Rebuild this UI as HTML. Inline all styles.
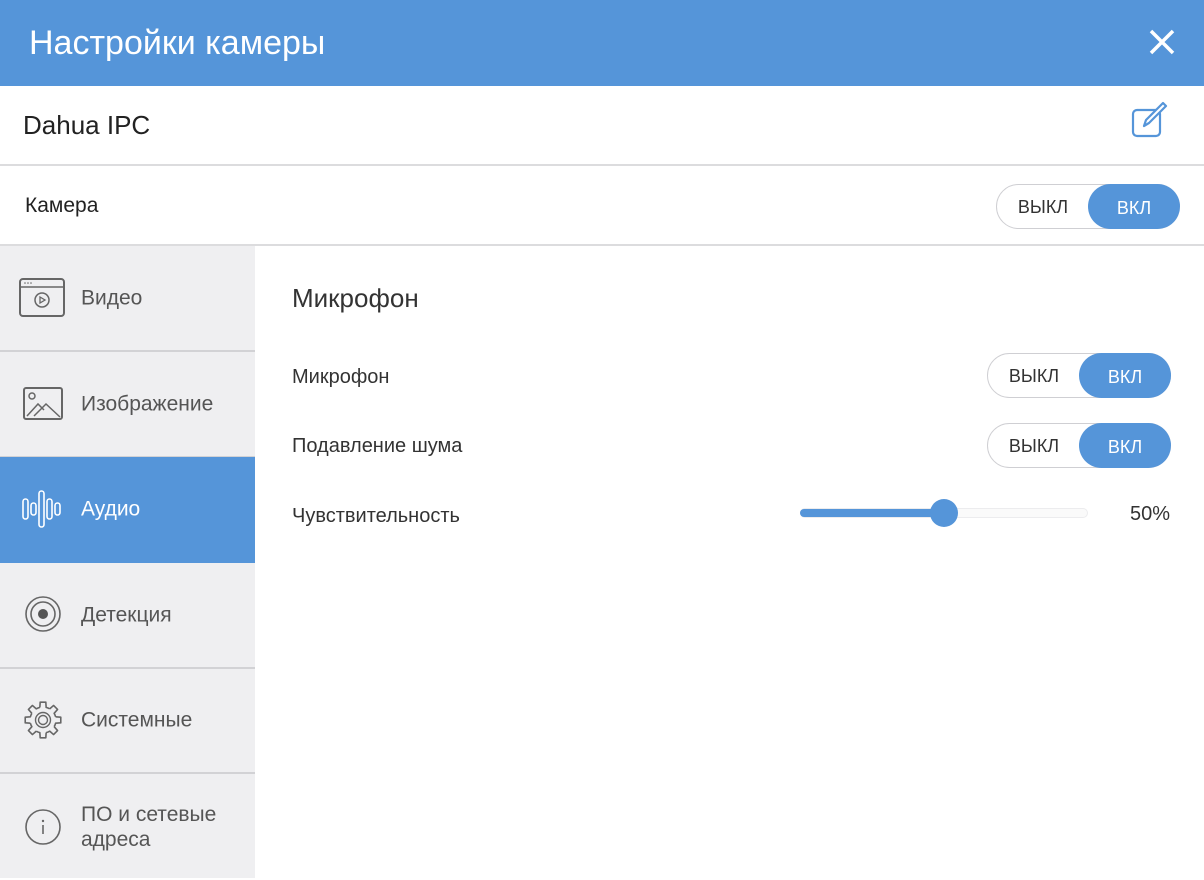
<!DOCTYPE html>
<html><head><meta charset="utf-8"><style>
*{margin:0;padding:0;box-sizing:border-box}
body{width:1204px;height:878px;overflow:hidden;background:#fff;font-family:"Liberation Sans",Arial,sans-serif;position:relative;color:#333}
.hdr{position:absolute;left:0;top:0;width:1204px;height:86px;background:#5595d9;color:#fff;font-size:34px;line-height:86px;padding-left:29px}
.row{position:absolute;left:0;width:1204px;border-bottom:2px solid #dcdcde}
.tg{position:absolute;width:184px;height:45px;border:1.5px solid #cfcfd3;border-radius:23px;background:#fff;font-size:18px}
.tg .off{position:absolute;left:0;width:92px;top:0;height:42px;padding-top:3px;display:flex;align-items:center;justify-content:center;color:#333}
.tg .on{position:absolute;right:-1px;top:-1px;width:92px;height:45px;padding-top:3px;border-radius:23px;background:#5595d9;color:#fff;display:flex;align-items:center;justify-content:center}
.side{position:absolute;left:0;top:246px;width:255px;height:632px;background:#efeff1}
.it{position:absolute;left:0;width:255px;height:106px;border-bottom:2px solid #d2d2d5;font-size:21px;color:#555}
.it span{position:absolute;left:81px;top:50%;transform:translateY(-50%);line-height:25px}
.it svg{position:absolute;left:18px;top:50%;transform:translateY(-50%)}
.lbl{position:absolute;left:292px;font-size:20px;color:#333}
</style></head><body>
<div class="hdr">Настройки камеры</div>
<svg style="position:absolute;left:1149px;top:29px" width="26" height="26"><path d="M2 2L24 24M24 2L2 24" stroke="#fff" stroke-width="3.5"/></svg>
<div class="row" style="top:86px;height:80px"><div style="position:absolute;left:23px;top:24px;font-size:26px;color:#222">Dahua IPC</div>
<svg style="position:absolute;left:1130px;top:14px" width="40" height="40" viewBox="0 0 40 40"><rect x="3" y="10" width="27" height="26" rx="4" fill="none" stroke="#5595d9" stroke-width="2.2"/><path d="M14 26L16 20L33 3L36 6L19 23Z" fill="#fff" stroke="#5595d9" stroke-width="2.2" stroke-linejoin="round"/></svg></div>
<div class="row" style="top:166px;height:80px"><div style="position:absolute;left:25px;top:28px;font-size:21px;color:#222">Камера</div>
<div class="tg" style="left:996px;top:18px"><div class="off">ВЫКЛ</div><div class="on">ВКЛ</div></div></div>

<div class="side">
<div class="it" style="top:0"><svg width="48" height="42" viewBox="0 0 48 42"><rect x="2" y="2" width="44" height="37" rx="3" fill="none" stroke="#666" stroke-width="2"/><path d="M2 10H46" stroke="#666" stroke-width="1.5"/><circle cx="7" cy="6" r=".8" fill="#666"/><circle cx="10" cy="6" r=".8" fill="#666"/><circle cx="13" cy="6" r=".8" fill="#666"/><circle cx="24" cy="23" r="7" fill="none" stroke="#666" stroke-width="1.5"/><path d="M22 20L27 23L22 26Z" fill="none" stroke="#666" stroke-width="1.3"/></svg><span>Видео</span></div>
<div class="it" style="top:106px"><svg width="44" height="36" viewBox="0 0 44 36" style="left:22px"><rect x="2" y="2" width="38" height="31" rx="2" fill="none" stroke="#666" stroke-width="2"/><circle cx="10" cy="10" r="3" fill="none" stroke="#666" stroke-width="1.5"/><path d="M5 30L16 18L22 24M12 30L24 18L38 31" fill="none" stroke="#666" stroke-width="1.5"/></svg><span>Изображение</span></div>
<div class="it" style="top:211px;background:#5595d9;color:#fff;border-bottom:2px solid #5595d9"><span>Аудио</span><svg width="44" height="40" viewBox="0 0 44 40" style="left:22px"><g fill="none" stroke="#fff" stroke-width="1.6"><rect x="1" y="10" width="5" height="20" rx="2.5"/><rect x="9" y="14" width="5" height="12" rx="2.5"/><rect x="17" y="2" width="5" height="36" rx="2.5"/><rect x="25" y="10" width="5" height="20" rx="2.5"/><rect x="33" y="14" width="5" height="12" rx="2.5"/></g></svg></div>
<div class="it" style="top:317px"><svg width="40" height="40" viewBox="0 0 40 40" style="left:24px"><circle cx="19" cy="19" r="17" fill="none" stroke="#666" stroke-width="1.6"/><circle cx="19" cy="19" r="12" fill="none" stroke="#666" stroke-width="1.6"/><circle cx="19" cy="19" r="5" fill="#555"/></svg><span>Детекция</span></div>
<div class="it" style="top:422px"><svg width="44" height="44" viewBox="-22 -22 44 44" style="left:21px"><g fill="none" stroke="#666" stroke-width="1.6" stroke-linejoin="round">
<g><path d="M12.61 -3.15L17.78 -2.82L17.78 2.82L12.61 3.15A13 13 0 0 1 11.14 6.7"/></g>
<g transform="rotate(45)"><path d="M12.61 -3.15L17.78 -2.82L17.78 2.82L12.61 3.15A13 13 0 0 1 11.14 6.7"/></g>
<g transform="rotate(90)"><path d="M12.61 -3.15L17.78 -2.82L17.78 2.82L12.61 3.15A13 13 0 0 1 11.14 6.7"/></g>
<g transform="rotate(135)"><path d="M12.61 -3.15L17.78 -2.82L17.78 2.82L12.61 3.15A13 13 0 0 1 11.14 6.7"/></g>
<g transform="rotate(180)"><path d="M12.61 -3.15L17.78 -2.82L17.78 2.82L12.61 3.15A13 13 0 0 1 11.14 6.7"/></g>
<g transform="rotate(225)"><path d="M12.61 -3.15L17.78 -2.82L17.78 2.82L12.61 3.15A13 13 0 0 1 11.14 6.7"/></g>
<g transform="rotate(270)"><path d="M12.61 -3.15L17.78 -2.82L17.78 2.82L12.61 3.15A13 13 0 0 1 11.14 6.7"/></g>
<g transform="rotate(315)"><path d="M12.61 -3.15L17.78 -2.82L17.78 2.82L12.61 3.15A13 13 0 0 1 11.14 6.7"/></g>
<circle r="7.5" stroke-width="1.4"/><circle r="4.5" stroke-width="1.4"/></g></svg><span>Системные</span></div>
<div class="it" style="top:528px;border-bottom:none"><svg width="40" height="40" viewBox="0 0 40 40" style="left:24px"><circle cx="19" cy="20" r="17" fill="none" stroke="#666" stroke-width="1.6"/><circle cx="19" cy="14" r="1.2" fill="#666"/><path d="M19 18V27" stroke="#666" stroke-width="1.6"/></svg><span>ПО и сетевые<br>адреса</span></div>
</div>

<div style="position:absolute;left:292px;top:283px;font-size:26px;color:#333">Микрофон</div>
<div class="lbl" style="top:366px">Микрофон</div>
<div class="tg" style="left:987px;top:353px"><div class="off">ВЫКЛ</div><div class="on">ВКЛ</div></div>
<div class="lbl" style="top:435px">Подавление шума</div>
<div class="tg" style="left:987px;top:423px"><div class="off">ВЫКЛ</div><div class="on">ВКЛ</div></div>
<div class="lbl" style="top:505px">Чувствительность</div>
<div style="position:absolute;left:800px;top:508px;width:288px;height:10px;border:1px solid #ececee;border-radius:5px;background:#fafafa"></div>
<div style="position:absolute;left:800px;top:509px;width:145px;height:8px;border-radius:4px;background:#5595d9"></div>
<div style="position:absolute;left:930px;top:499px;width:28px;height:28px;border-radius:50%;background:#5595d9"></div>
<div style="position:absolute;left:1130px;top:503px;font-size:20px;color:#333">50%</div>
</body></html>
